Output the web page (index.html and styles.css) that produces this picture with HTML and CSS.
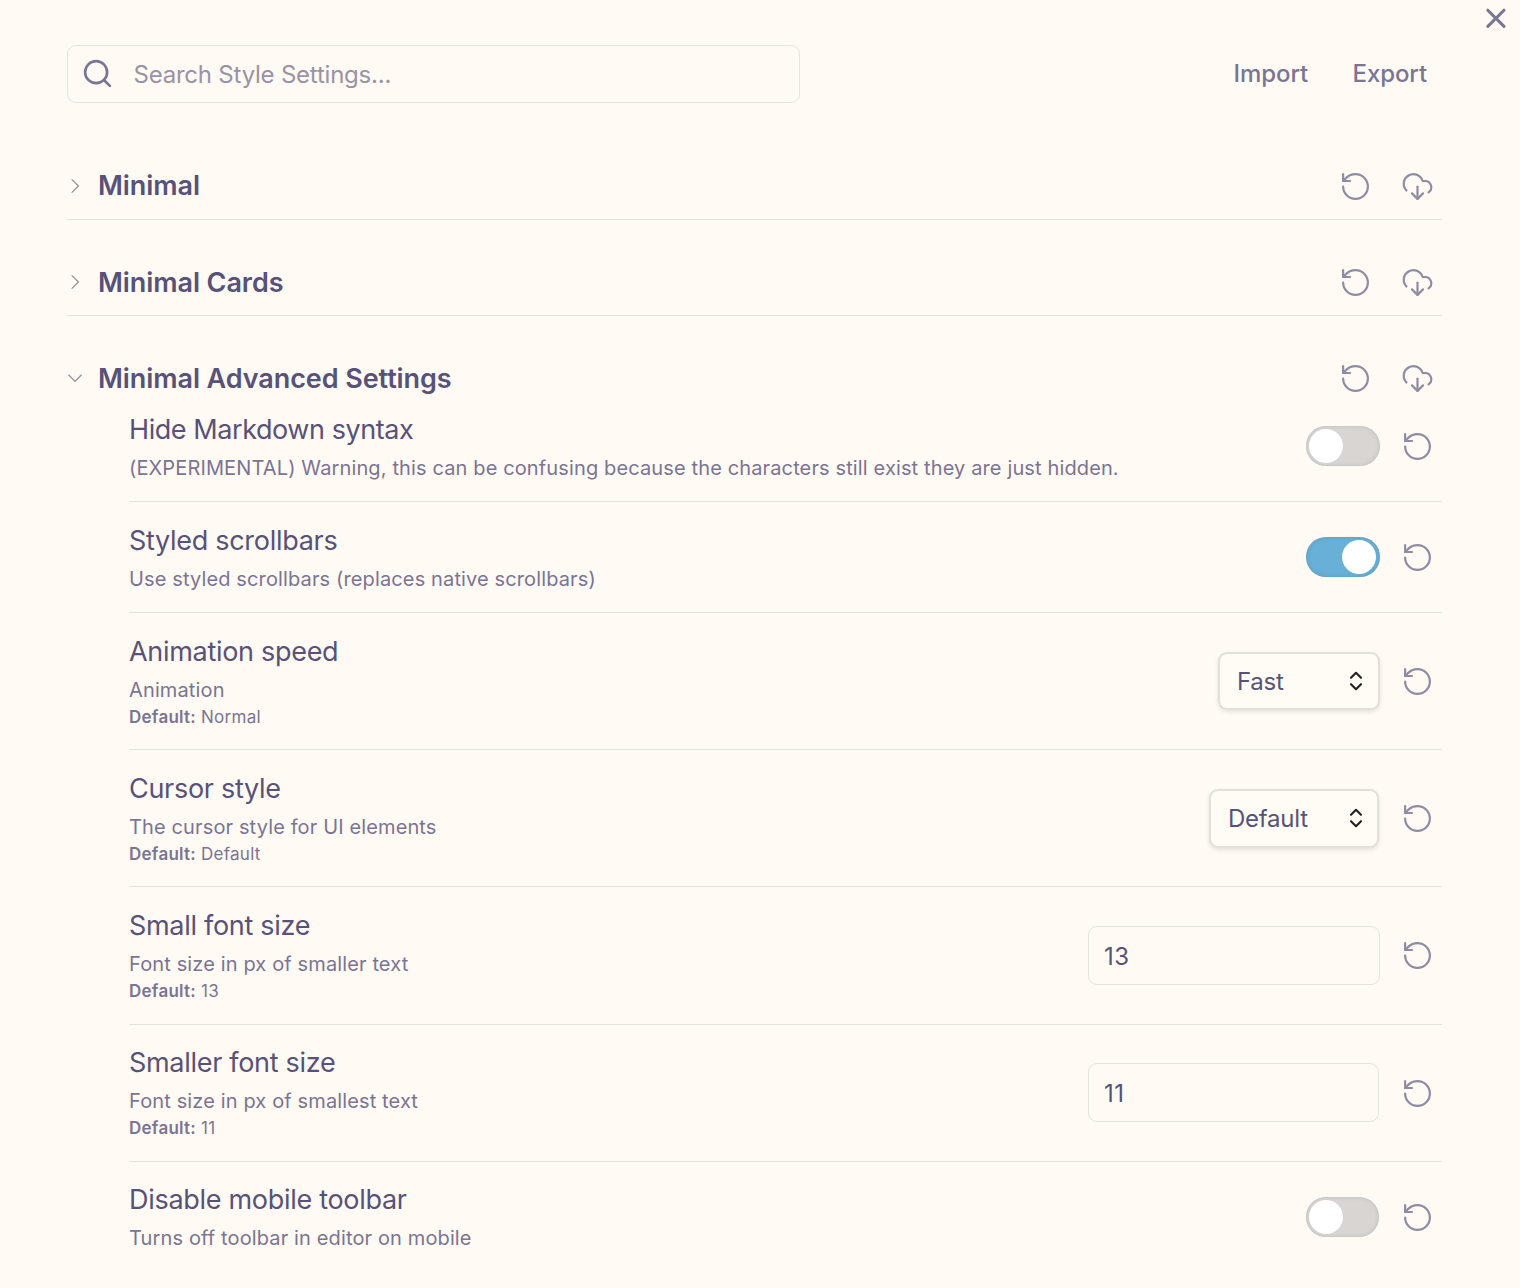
FILE: index.html
```html
<!DOCTYPE html>
<html lang="en">
<head>
<meta charset="utf-8">
<title>Style Settings</title>
<link rel="stylesheet" href="styles.css">
</head>
<body>
<svg class="sprite" aria-hidden="true">
  <symbol id="reset" viewBox="0 0 24 24"><path d="M3 12a9 9 0 1 0 9-9 9.75 9.75 0 0 0-6.74 2.74L3 8"/><path d="M3 3v5h5"/></symbol>
  <symbol id="cloud" viewBox="0 0 24 24"><path d="M4 14.899A7 7 0 1 1 15.71 8h1.79a4.5 4.5 0 0 1 2.5 8.242"/><path d="M12 12v9"/><path d="m8 17 4 4 4-4"/></symbol>
  <symbol id="chevron" viewBox="0 0 16 16"><path d="M5 1.7 11.4 8 5 14.3"/></symbol>
  <symbol id="updown" viewBox="0 0 14 20"><path d="M2 6.8 7 1.8l5 5M2 13.2l5 5 5-5"/></symbol>
</svg>
<button class="close" aria-label="Close"><svg viewBox="0 0 22 22"><path d="m2.8 3.2 16.2 16.2M19 3.2 2.8 19.4"/></svg></button>
<main class="settings">
  <div class="toolbar">
    <label class="search">
      <svg class="search-icon" viewBox="0 0 24 24"><circle cx="11" cy="11" r="8"/><path d="m21 21-4.3-4.3"/></svg>
      <span class="placeholder">Search Style Settings...</span>
    </label>
    <nav class="links"><a class="import">Import</a><a class="export">Export</a></nav>
  </div>

  <div class="heading"><svg class="chevron"><use href="#chevron"/></svg><h2>Minimal</h2><svg class="icon"><use href="#reset"/></svg><svg class="icon"><use href="#cloud"/></svg></div>
  <div class="heading"><svg class="chevron"><use href="#chevron"/></svg><h2>Minimal Cards</h2><svg class="icon"><use href="#reset"/></svg><svg class="icon"><use href="#cloud"/></svg></div>
  <div class="heading open"><svg class="chevron"><use href="#chevron"/></svg><h2>Minimal Advanced Settings</h2><svg class="icon"><use href="#reset"/></svg><svg class="icon"><use href="#cloud"/></svg></div>

  <section class="items">
    <div class="item">
      <div class="info"><div class="name tight">Hide Markdown syntax</div><div class="desc">(EXPERIMENTAL) Warning, this can be confusing because the characters still exist they are just hidden.</div></div>
      <span class="toggle"></span><svg class="icon"><use href="#reset"/></svg>
    </div>
    <div class="item">
      <div class="info"><div class="name">Styled scrollbars</div><div class="desc">Use styled scrollbars (replaces native scrollbars)</div></div>
      <span class="toggle on"></span><svg class="icon"><use href="#reset"/></svg>
    </div>
    <div class="item">
      <div class="info"><div class="name">Animation speed</div><div class="desc">Animation</div><div class="default"><b>Default:</b> Normal</div></div>
      <span class="select fast">Fast<svg><use href="#updown"/></svg></span><svg class="icon"><use href="#reset"/></svg>
    </div>
    <div class="item">
      <div class="info"><div class="name">Cursor style</div><div class="desc">The cursor style for UI elements</div><div class="default"><b>Default:</b> Default</div></div>
      <span class="select cursor">Default<svg><use href="#updown"/></svg></span><svg class="icon"><use href="#reset"/></svg>
    </div>
    <div class="item tall">
      <div class="info"><div class="name">Small font size</div><div class="desc">Font size in px of smaller text</div><div class="default"><b>Default:</b> 13</div></div>
      <span class="field">13</span><svg class="icon"><use href="#reset"/></svg>
    </div>
    <div class="item raised">
      <div class="info"><div class="name">Smaller font size</div><div class="desc">Font size in px of smallest text</div><div class="default"><b>Default:</b> 11</div></div>
      <span class="field narrow">11</span><svg class="icon"><use href="#reset"/></svg>
    </div>
    <div class="item raised">
      <div class="info"><div class="name">Disable mobile toolbar</div><div class="desc">Turns off toolbar in editor on mobile</div></div>
      <span class="toggle narrow"></span><svg class="icon"><use href="#reset"/></svg>
    </div>
  </section>
</main>
</body>
</html>
```
FILE: styles.css
```css
* { box-sizing: border-box; }
html { overflow: hidden; }
body {
  margin: 0;
  height: 1288px;
  overflow: hidden;
  background: #fffaf3;
  color: #575279;
  font-family: Inter, "Liberation Sans", sans-serif;
}
svg { fill: none; stroke: currentColor; stroke-linecap: round; stroke-linejoin: round; flex: none; }
.sprite { display: none; }
.close {
  position: absolute;
  top: 7px;
  right: 13px;
  width: 22px;
  height: 22px;
  padding: 0;
  border: 0;
  background: none;
  color: #797593;
}
.close svg { display: block; width: 22px; height: 22px; stroke-width: 3; }
.settings { width: 1375px; margin-left: 67px; padding-top: 45px; }

.toolbar { display: flex; justify-content: space-between; height: 58px; margin-bottom: 21px; }
.search {
  display: flex;
  align-items: center;
  width: 733px;
  padding-left: 13px;
  border: 1px solid #e9e3df;
  border-radius: 9px;
}
.search-icon { width: 33px; height: 33px; margin-bottom: 1px; color: #797593; stroke-width: 1.9; }
.placeholder { margin-left: 19.5px; font-size: 24px; letter-spacing: -0.22px; color: #9893a5; }
.links { display: flex; align-items: center; gap: 44.5px; padding: 0 15px 2px 0; color: #797593; font-size: 24px; font-weight: 500; letter-spacing: -0.1px; }

.heading {
  display: flex;
  align-items: center;
  height: 96px;
  padding: 50px 8px 21px 0;
  border-bottom: 1px solid #e6e1dc;
}
.heading.open { height: 75px; padding-bottom: 1px; border-bottom: 0; }
.heading h2 { flex: 1; margin: 0 0 0 15px; font-size: 27px; line-height: 24px; font-weight: 600; letter-spacing: -0.08px; }
.heading + .heading h2 { margin-top: 2px; }
.chevron { width: 16px; height: 16px; color: #8c8a94; stroke-width: 1.1; }
.open .chevron { transform: rotate(90deg); }
.icon { width: 33px; height: 33px; color: #908ba3; stroke-width: 1.6; }
.heading .icon + .icon { margin-left: 29px; }

.items { margin-left: 62px; }
.item {
  display: flex;
  align-items: center;
  padding-right: 8px;
  border-bottom: 1px solid #e6e1dc;
}
.item:last-child { border-bottom: 0; }
.item.tall { padding-bottom: 1px; }
.info { flex: 1; padding: 20px 0 14px; }
.info:has(.default) { padding-bottom: 24px; }
.raised .info { padding-top: 19px; padding-bottom: 15px; }
.raised .info:has(.default) { padding-bottom: 25px; }
.name { font-size: 27px; line-height: 38px; letter-spacing: -0.3px; }
.name.tight { letter-spacing: -0.43px; }
.desc { font-size: 20px; line-height: 38px; letter-spacing: 0.13px; color: #797593; white-space: nowrap; }
.default { font-size: 17px; line-height: 16px; letter-spacing: 0.26px; color: #797593; }
.default b { font-weight: 600; }
.item .icon { margin-left: 21px; }

.toggle {
  display: flex;
  align-items: center;
  width: 74px;
  height: 40px;
  padding: 0 4px 0 3px;
  border-radius: 20px;
  background: #d9d5d3;
  box-shadow: inset 0 0 5px rgba(0, 0, 0, 0.1), inset 0 0 1px rgba(0, 0, 0, 0.15);
}
.toggle::before { content: ""; width: 34px; height: 34px; border-radius: 50%; background: #fff; }
.toggle.on { justify-content: flex-end; background: #69b0d6; }
.toggle.narrow { width: 73px; margin-right: 1px; }

.select {
  display: flex;
  align-items: center;
  justify-content: space-between;
  height: 58px;
  padding: 0 15px 0 17px;
  border: 2px solid #e3dfdb;
  border-radius: 9px;
  background: #fffbf5;
  font-size: 24px;
  letter-spacing: -0.25px;
  box-shadow: 0 2px 4px rgba(0, 0, 0, 0.1);
}
.select svg { width: 14px; height: 20px; color: #222; stroke-width: 2.1; }
.fast { width: 162px; }
.cursor { width: 170px; height: 59px; margin-right: 1px; padding-right: 14px; }
.field {
  display: flex;
  align-items: center;
  width: 292px;
  height: 59px;
  padding: 2px 0 0 15px;
  border: 1px solid #e6e2df;
  border-radius: 9px;
  font-size: 24px;
  letter-spacing: 0.6px;
}
.field.narrow { width: 291px; margin: 0 1px 1px 0; }
```
